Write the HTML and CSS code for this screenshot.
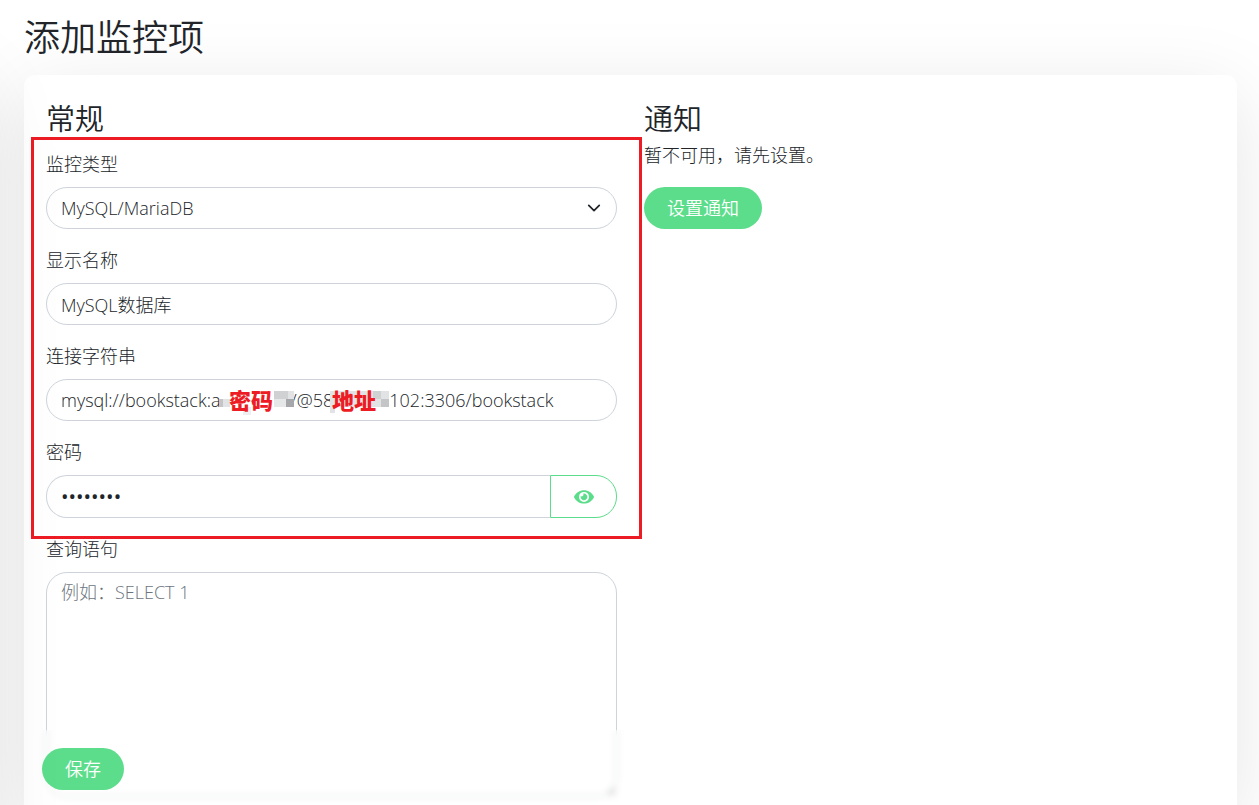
FILE: index.html
```html
<!DOCTYPE html>
<html lang="zh-CN">
<head>
    <meta charset="UTF-8">
    <meta name="viewport" content="width=device-width, initial-scale=1.0">
    <title>添加监控项</title>
    <link rel="stylesheet" href="styles.css">
</head>
<body>
    <main>
        <h1>添加监控项</h1>

        <form class="shadow-box">
            <div class="row">
                <section class="col">
                    <h2>常规</h2>

                    <div class="marked">
                        <div class="field">
                            <label for="type">监控类型</label>
                            <div class="select-wrap">
                                <select id="type" class="form-control">
                                    <option>MySQL/MariaDB</option>
                                </select>
                                <svg class="chevron" viewBox="0 0 16 16" aria-hidden="true"><path d="M2 5l6 6 6-6"/></svg>
                            </div>
                        </div>

                        <div class="field">
                            <label for="name">显示名称</label>
                            <input id="name" class="form-control" type="text" value="MySQL数据库">
                        </div>

                        <div class="field">
                            <label for="connection">连接字符串</label>
                            <div class="masked">
                                <input id="connection" class="form-control" type="text" value="mysql://bookstack:a&nbsp;&nbsp;&nbsp;&nbsp;&nbsp;&nbsp;&nbsp;&nbsp;&nbsp;&nbsp;&nbsp;&nbsp;&nbsp;&nbsp;&nbsp;/@58&nbsp;&nbsp;&nbsp;&nbsp;&nbsp;&nbsp;&nbsp;&nbsp;&nbsp;&nbsp;&nbsp;&nbsp;102:3306/bookstack">
                                <svg class="mosaic" viewBox="0 0 76 24" aria-hidden="true">
                                    <path fill="#c4c5c7" d="M0 8h4v8H0z"/>
                                    <path fill="#e2e3e4" d="M4 8h7v8H4z"/>
                                    <path fill="#eeeff0" d="M24 16h8v8h-8z"/>
                                    <path fill="#d0d1d3" d="M55 0h14v8H55z"/>
                                    <path fill="#e6e7e8" d="M55 8h12v8H55z"/>
                                    <path fill="#e2e3e4" d="M69 0h6v8h-6z"/>
                                    <path fill="#a6a7aa" d="M67 8h8v8h-8z"/>
                                </svg>
                                <strong class="mask-text">密码</strong>
                                <svg class="mosaic mosaic-host" viewBox="0 0 76 24" aria-hidden="true">
                                    <path fill="#e2e3e4" d="M0 0h59v16H0zM0 16h5v6H0z"/>
                                    <path fill="#d0d1d3" d="M43 0h8v8h-8z"/>
                                    <path fill="#c4c5c7" d="M51 8h8v8h-8z"/>
                                </svg>
                                <strong class="mask-text mask-host">地址</strong>
                            </div>
                        </div>

                        <div class="field">
                            <label for="password">密码</label>
                            <div class="input-group">
                                <input id="password" class="form-control" type="password" value="password">
                                <button class="btn-outline" type="button" aria-label="显示密码">
                                    <svg viewBox="0 0 576 512" aria-hidden="true"><path d="M572.52 241.4C518.29 135.59 410.93 64 288 64S57.68 135.64 3.48 241.41a32.35 32.35 0 0 0 0 29.19C57.71 376.41 165.07 448 288 448s230.32-71.64 284.52-177.41a32.35 32.35 0 0 0 0-29.19zM288 400a144 144 0 1 1 144-144 143.93 143.93 0 0 1-144 144zm0-240a95.31 95.31 0 0 0-25.31 3.79 47.85 47.85 0 0 1-66.9 66.9A95.78 95.78 0 1 0 288 160z"/></svg>
                                </button>
                            </div>
                        </div>
                    </div>

                    <div class="field">
                        <label for="query">查询语句</label>
                        <textarea id="query" class="form-control" placeholder="例如：SELECT 1"></textarea>
                    </div>
                </section>

                <section class="col">
                    <h2>通知</h2>
                    <p>暂不可用，请先设置。</p>
                    <button class="btn" type="button">设置通知</button>
                </section>
            </div>

            <div class="bottom-bar">
                <button class="btn" type="submit">保存</button>
            </div>
        </form>
    </main>
</body>
</html>
```

FILE: styles.css
```css
* {
    box-sizing: border-box;
}

html {
    scrollbar-width: none;
}

body {
    margin: 0;
    background: #fff;
    color: #212529;
    font-family: "Open Sans", "Noto Sans CJK SC", sans-serif;
    font-size: 18px;
    font-weight: 300;
    line-height: 27px;
    overflow-x: hidden;
}

/* shadow cast by the monitor list on the left */
body::before {
    content: "";
    position: fixed;
    top: 75px;
    bottom: -100px;
    left: -424px;
    width: 400px;
    box-shadow: 0 17px 79px rgba(0, 0, 0, 0.15);
    pointer-events: none;
    z-index: 1;
}

main {
    padding: 16px 22px 0 24px;
}

h1, h2, p {
    margin: 0;
}

h1, h2 {
    font-weight: 350;
}

h1 {
    margin-bottom: 15px;
    font-size: 36px;
    line-height: 44px;
}

h2 {
    margin-bottom: 5px;
    font-size: 29px;
    line-height: 36px;
}

.shadow-box {
    padding: 26px 22px 0;
    border-radius: 11px;
    background: #fff;
    box-shadow: 0 17px 79px rgba(0, 0, 0, 0.1);
}

.row {
    display: grid;
    grid-template-columns: 1fr 1fr;
    gap: 27px;
}

.col p {
    margin-bottom: 18px;
}

/* form fields */
.field {
    margin-bottom: 18px;
}

.field label {
    display: block;
    margin-bottom: 9px;
}

.form-control {
    display: block;
    width: 100%;
    height: 42px;
    padding: 6px 14px;
    border: 1px solid #ced4da;
    border-radius: 21px;
    background: #fff;
    color: #212529;
    font: inherit;
    appearance: none;
}

textarea.form-control {
    height: 225px;
    resize: vertical;
}

.form-control::placeholder {
    color: #6c757d;
    opacity: 1;
}

.select-wrap, .masked, .marked {
    position: relative;
}

.chevron {
    position: absolute;
    top: 14px;
    right: 16px;
    width: 14px;
    height: 14px;
    fill: none;
    stroke: #212529;
    stroke-width: 2;
    stroke-linecap: round;
    stroke-linejoin: round;
    pointer-events: none;
}

.input-group {
    display: flex;
}

.input-group .form-control {
    flex: 1;
    height: 43px;
    border-right: 0;
    border-radius: 21px 0 0 21px;
    font-size: 20px;
    font-weight: 400;
}

.btn-outline {
    display: flex;
    align-items: center;
    justify-content: center;
    width: 67px;
    border: 1px solid #5cdd8b;
    border-radius: 0 21px 21px 0;
    background: #fff;
    color: #5cdd8b;
}

.btn-outline svg {
    width: 20px;
    fill: currentColor;
}

.btn {
    height: 42px;
    padding: 0 23px;
    border: 0;
    border-radius: 21px;
    background: #5cdd8b;
    color: #fff;
    font: inherit;
    font-weight: 350;
}

/* red frame around the fields to fill in */
.marked {
    margin: 14px 0 18px;
}

.marked::after {
    content: "";
    position: absolute;
    inset: -14px -25px -21px -15px;
    border: 3px solid #ed1c24;
    pointer-events: none;
}

.marked .field:last-child {
    margin-bottom: 0;
}

/* hidden parts of the connection string */
.mosaic {
    position: absolute;
    top: 12px;
    left: 173px;
    width: 76px;
    height: 24px;
}

.mosaic-host {
    left: 284px;
}

.mask-text {
    position: absolute;
    top: 8px;
    left: 183px;
    color: #ed1c24;
    font-size: 22px;
    font-weight: 900;
}

.mask-host {
    left: 286px;
}

.bottom-bar {
    position: fixed;
    right: 22px;
    bottom: 0;
    left: 24px;
    padding: 18px 18px 15px;
    background: rgba(255, 255, 255, 0.2);
    backdrop-filter: blur(3px);
}

.bottom-bar .btn {
    display: block;
}
```
